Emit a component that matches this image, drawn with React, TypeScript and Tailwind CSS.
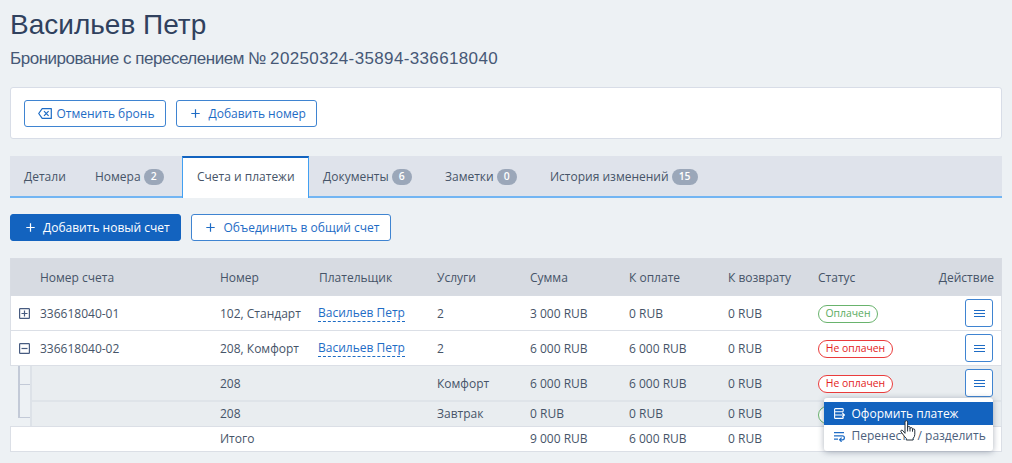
import type { ReactNode } from 'react';
import clsx from 'clsx';

const tabs = [
    { label: 'Детали', width: 'w-[71px]' },
    { label: 'Номера', count: 2, width: 'w-[101px]' },
    { label: 'Счета и платежи', active: true, width: 'w-[127px]' },
    { label: 'Документы', count: 6, width: 'w-[122px]' },
    { label: 'Заметки', count: 0, width: 'w-[105px]' },
    { label: 'История изменений', count: 15, width: 'w-[180px]' },
];

const headers = ['Номер счета', 'Номер', 'Плательщик', 'Услуги', 'Сумма', 'К оплате', 'К возврату', 'Статус'];

const accounts = [
    { id: '336618040-01', room: '102, Стандарт', sum: '3 000 RUB', due: '0 RUB', paid: true, open: false },
    { id: '336618040-02', room: '208, Комфорт', sum: '6 000 RUB', due: '6 000 RUB', paid: false, open: true },
];

const columns = 'grid grid-cols-[29px_180px_99px_118px_93px_99px_99px_90px_1fr] items-center';
const subColumns = 'grid grid-cols-[188px_217px_93px_99px_99px_90px_1fr] items-center';

function PlusIcon() {
    return (
        <svg className="h-[9px] w-[9px] shrink-0" viewBox="0 0 9 9" fill="none" stroke="currentColor" strokeWidth="1.2">
            <path d="M4.5 0.3v8.4M0.3 4.5h8.4" />
        </svg>
    );
}

function CancelIcon() {
    return (
        <svg className="h-[11px] w-[14px] shrink-0" viewBox="0 0 14 11" fill="none" stroke="currentColor" strokeWidth="1.2">
            <path d="M4.2 0.6h9.1v9.8H4.2L0.7 5.5z" strokeLinejoin="round" />
            <path d="M6 3.2l4.6 4.6M10.6 3.2L6 7.8" />
        </svg>
    );
}

function ExpandIcon({ open }: { open: boolean }) {
    return (
        <svg className="ml-[8px] h-[11px] w-[11px] text-[#475b80]" viewBox="0 0 11 11" fill="none" stroke="currentColor">
            <rect x="0.6" y="0.6" width="9.8" height="9.8" rx="0.6" strokeWidth="1.2" />
            <path d={open ? 'M2.5 5.5h6' : 'M2.5 5.5h6M5.5 2.5v6'} strokeWidth="1.2" />
        </svg>
    );
}

function Button({ children, className }: { children: ReactNode; className: string }) {
    return (
        <button className={clsx('flex h-[27px] items-center whitespace-nowrap rounded-[3px] border', className)}>
            {children}
        </button>
    );
}

function Status({ paid }: { paid: boolean }) {
    return (
        <span
            className={clsx(
                'mt-[2px] flex h-[18px] items-center justify-center justify-self-start whitespace-nowrap rounded-full border bg-white text-[10.4px]',
                paid ? 'w-[60px] border-[#69b36d] text-[#5aab5f]' : 'w-[75px] border-[#ea3c3c] text-[#e32222]'
            )}
        >
            {paid ? 'Оплачен' : 'Не оплачен'}
        </span>
    );
}

function ActionButton() {
    return (
        <button className="mr-[8px] flex h-[28px] w-[28px] items-center justify-center justify-self-end rounded-[3px] border border-[#3f84d1] bg-white text-[#1e6cc5]">
            <svg className="h-[9px] w-[11px]" viewBox="0 0 11 9" stroke="currentColor" strokeWidth="1.1">
                <path d="M0 1.5h11M0 4.5h11M0 7.5h11" />
            </svg>
        </button>
    );
}

function ActionMenu() {
    return (
        <div className="absolute left-[814px] top-[140px] z-10 h-[53px] w-[169px] whitespace-nowrap rounded-[3px] bg-white pt-[4px] shadow-[0_1px_6px_rgba(50,65,90,0.4)]">
            <div className="flex h-[23px] items-center bg-[#1363bf] pl-[9.5px] text-white">
                <svg className="mr-[7px] h-[11px] w-[11px] shrink-0" viewBox="0 0 11 11" fill="none" stroke="currentColor" strokeWidth="1.1">
                    <path d="M9.2 3.6V1.3Q9.2 0.6 8.5 0.6H1.3Q0.6 0.6 0.6 1.3v8.4Q0.6 10.4 1.3 10.4H8.5Q9.2 10.4 9.2 9.7V8.9M0.6 3.7h8.6M0.6 7h9.3M8.3 4.9L10.4 7 8.3 9.1" />
                </svg>
                Оформить платеж
            </div>
            <div className="flex h-[22px] items-center pl-[9.5px] text-[#4c607c]">
                <svg className="mr-[7px] h-[11px] w-[11px] shrink-0 text-[#1e6cc5]" viewBox="0 0 11 11" fill="none" stroke="currentColor" strokeWidth="1.2">
                    <path d="M0 1.6h10M0 4.8h8.4a2 2 0 010 4H5.8M0 8.2h4M7.6 6.7L5.6 8.8l2 2" />
                </svg>
                Перенести / разделить
            </div>
            <svg className="absolute left-[76px] top-[22px] h-[21px] w-[17px]" viewBox="0 0 17 21" fill="white" stroke="#26303b" strokeWidth="1" strokeLinejoin="round">
                <path d="M5 13.3V2.1Q5 0.6 6.3 0.6T7.6 2.1v6.1V7.5q0-1.1 1.2-1.1T10 7.5v1.2q0-1.1 1.2-1.1t1.3 1.2v1.1q0-1 1.1-1t1.2 1.2v4.2q0 2.4-1.7 4.2v1.5H6.3v-1.6Q4.7 17 3.6 15.2L1 11.9q-.7-1 .2-1.6.8-.5 1.7.4z" />
                <path d="M7.6 8v3.5M10 8.7v2.8M12.5 9.9v1.8" fill="none" />
            </svg>
        </div>
    );
}

export default function App() {
    return (
        <main className="h-[463px] w-[1012px] overflow-hidden bg-[#edf1f4] px-[10px] font-['Open_Sans','Noto_Sans',sans-serif] text-[12px] text-[#465468]">
            <header className="h-[87px] font-['Liberation_Sans',Arial,sans-serif]">
                <h1 className="h-[45px] pt-[8px] text-[28px] leading-[34px] text-[#30415e]">Васильев Петр</h1>
                <p className="whitespace-nowrap pt-[4px] text-[17px] leading-[20px] text-[#465876]">
                    <span className="tracking-[-0.48px]">Бронирование с переселением № </span>
                    <span className="tracking-[0.36px]">20250324-35894-336618040</span>
                </p>
            </header>

            <section className="flex h-[52px] w-[992px] gap-[10px] rounded-[3px] border border-[#d8dde7] bg-white px-[13px] pt-[12px]">
                <Button className="w-[142px] gap-[5px] border-[#3f84d1] bg-white pl-[12.5px] text-[#1e6cc5]">
                    <CancelIcon />
                    Отменить бронь
                </Button>
                <Button className="w-[141px] gap-[8.5px] border-[#3f84d1] bg-white pl-[14px] text-[#1e6cc5]">
                    <PlusIcon />
                    Добавить номер
                </Button>
            </section>

            <nav className="mt-[17px] flex h-[42px] w-[992px] border-b-2 border-[#72b5f3] bg-[#dfe3eb]">
                {tabs.map((tab) => (
                    <div
                        key={tab.label}
                        className={clsx(
                            'flex shrink-0 items-center gap-[3px] whitespace-nowrap pl-[14px]',
                            tab.width,
                            tab.active ? 'mb-[-2px] border-x border-t-2 border-x-[#42a0f2] border-t-[#1363bf] bg-white pb-[2px]' : 'pt-[2px]'
                        )}
                    >
                        {tab.label}
                        {tab.count !== undefined && (
                            <span className="flex h-[16px] items-center justify-center rounded-full bg-[#9ba7b9] px-[7px] text-[10.4px] font-semibold text-white">
                                {tab.count}
                            </span>
                        )}
                    </div>
                ))}
            </nav>

            <div className="mt-[16px] flex gap-[10px]">
                <Button className="w-[171px] gap-[8px] border-[#1363bf] bg-[#1363bf] pl-[15px] text-white">
                    <PlusIcon />
                    Добавить новый счет
                </Button>
                <Button className="w-[200px] gap-[8.5px] border-[#3f84d1] bg-white pl-[14px] text-[#1e6cc5]">
                    <PlusIcon />
                    Объединить в общий счет
                </Button>
            </div>

            <section className="relative mt-[17px] w-[992px] whitespace-nowrap">
                <div className={clsx(columns, 'h-[38px] border border-[#d8dce3] bg-[#d7dbe2] pt-[2px]')}>
                    <span />
                    {headers.slice(0, 7).map((title) => (
                        <span key={title}>{title}</span>
                    ))}
                    <div className="flex justify-between pr-[7px]">
                        <span>{headers[7]}</span>
                        <span>Действие</span>
                    </div>
                </div>
                {accounts.map((row) => (
                    <div key={row.id} className={clsx(columns, 'h-[35px] border-x border-b border-[#dbdfe6] bg-white')}>
                        <ExpandIcon open={row.open} />
                        <span className="pt-px">{row.id}</span>
                        <span className="pt-px">{row.room}</span>
                        <a className="-ml-px mt-px justify-self-start border-b border-dashed border-[#1e6cc5] leading-[16px] text-[#1e6cc5]">Васильев Петр</a>
                        <span className="pt-px">2</span>
                        <span className="pt-px">{row.sum}</span>
                        <span className="pt-px">{row.due}</span>
                        <span className="pt-px">0 RUB</span>
                        <div className="flex items-center justify-between">
                            <Status paid={row.paid} />
                            <ActionButton />
                        </div>
                    </div>
                ))}

                <div className="flex h-[60px]">
                    <div className="flex w-[20px] flex-col pl-[8px]">
                        <div className="h-[18px] w-[12px] border-l-2 border-[#c3cad7]" />
                        <div className="h-[34px] w-[12px] border-y border-l-2 border-[#c3cad7]" />
                    </div>
                    <div className="w-[972px] border-l-2 border-r border-[#dde2e8] bg-[#e9edf0]">
                        <div className={clsx(subColumns, 'h-[36px] border-b-2 border-[#dfe4e9]')}>
                            <span />
                            <span className="pt-px">208</span>
                            <span className="pt-px">Комфорт</span>
                            <span className="pt-px">6 000 RUB</span>
                            <span className="pt-px">6 000 RUB</span>
                            <span className="pt-px">0 RUB</span>
                            <div className="flex items-center justify-between">
                                <Status paid={false} />
                                <ActionButton />
                            </div>
                        </div>
                        <div className={clsx(subColumns, 'h-[24px]')}>
                            <span />
                            <span>208</span>
                            <span>Завтрак</span>
                            <span>0 RUB</span>
                            <span>0 RUB</span>
                            <span>0 RUB</span>
                            <Status paid />
                        </div>
                    </div>
                </div>

                <div className={clsx(columns, 'h-[26px] border border-[#dbdfe6] bg-white')}>
                    <span />
                    <span />
                    <span>Итого</span>
                    <span />
                    <span />
                    <span>9 000 RUB</span>
                    <span>6 000 RUB</span>
                    <span>0 RUB</span>
                </div>
                <ActionMenu />
            </section>
        </main>
    );
}
